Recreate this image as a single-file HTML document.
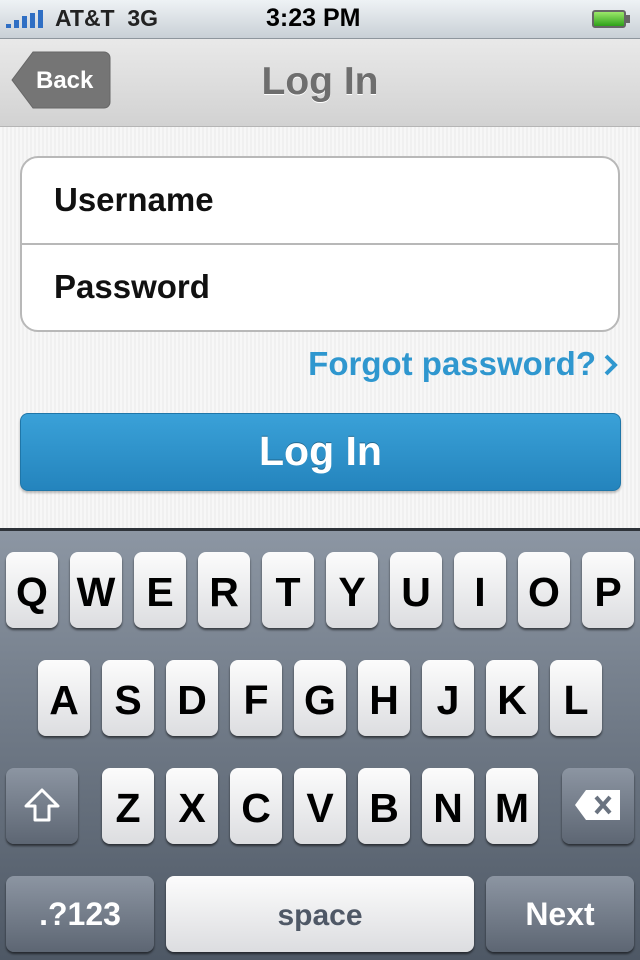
<!DOCTYPE html>
<html><head><meta charset="utf-8"><style>
*{margin:0;padding:0;box-sizing:border-box}
body{width:640px;height:960px;overflow:hidden;font-family:"Liberation Sans",Arial,sans-serif;font-weight:bold;background:#f4f4f4;position:relative}
.abs{position:absolute}
#status{left:0;top:0;width:640px;height:39px;background:linear-gradient(#eef2f5,#c9d0d6);border-bottom:1px solid #8e969d}
#nav{left:0;top:39px;width:640px;height:88px;background:linear-gradient(#e9e9e9,#d2d2d2);border-bottom:1px solid #b5b5b5}
#content{left:0;top:127px;width:640px;height:401px;background:repeating-linear-gradient(90deg,#f7f7f7 0 2px,#f0f0f0 2px 4px)}
.form{left:20px;top:156px;width:600px;height:176px;background:#fff;border:2px solid #b8b8b8;border-radius:18px}
.lbl{font-size:33px;color:#111;left:54px}
#kb{left:0;top:528px;width:640px;height:432px;background:linear-gradient(#8c96a3,#4e5865);border-top:3px solid #2e3339}
.k{position:absolute;width:52px;height:76px;border-radius:8px;background:linear-gradient(#fcfcfc,#dcdde0);box-shadow:0 2px 2px rgba(0,0,0,.55);font-size:41px;color:#000;text-align:center;line-height:80px}
.d{position:absolute;height:76px;border-radius:8px;background:linear-gradient(#8c95a2,#5d6673);box-shadow:0 2px 2px rgba(0,0,0,.55);color:#fff;text-align:center;line-height:76px;font-size:32px}
</style></head><body>
<div id="status" class="abs">
 <svg class="abs" style="left:6px;top:10px" width="42" height="18"><rect x="0" y="14" width="5" height="4" fill="#2f6fc4"/><rect x="8" y="10" width="5" height="8" fill="#2f6fc4"/><rect x="16" y="6" width="5" height="12" fill="#2f6fc4"/><rect x="24" y="3" width="5" height="15" fill="#2f6fc4"/><rect x="32" y="0" width="5" height="18" fill="#2f6fc4"/></svg>
 <div class="abs" style="left:55px;top:5px;font-size:23px;color:#222">AT&amp;T&nbsp; 3G</div>
 <div class="abs" style="left:266px;top:4px;font-size:25px;color:#000">3:23 PM</div>
 <div class="abs" style="left:592px;top:10px;width:34px;height:18px;border:2px solid #666;border-radius:3px;background:linear-gradient(#9be86a,#2ea11a)"></div>
 <div class="abs" style="left:626px;top:15px;width:4px;height:8px;background:#666"></div>
</div>
<div id="nav" class="abs">
 <svg class="abs" style="left:11px;top:12px" width="100" height="60"><path d="M22 1 H93 a6 6 0 0 1 6 6 V51 a6 6 0 0 1 -6 6 H22 L1 29 Z" fill="#757575" stroke="#666" stroke-width="1"/></svg>
 <div class="abs" style="left:36px;top:28px;font-size:24px;color:#fff">Back</div>
 <div class="abs" style="left:0;width:640px;top:21px;text-align:center;font-size:39px;color:#6e6e6e;text-shadow:0 1px 0 #fff">Log In</div>
</div>
<div id="content" class="abs"></div>
<div class="form abs"></div>
<div class="abs" style="left:22px;top:243px;width:596px;height:2px;background:#b8b8b8"></div>
<div class="abs lbl" style="top:181px">Username</div>
<div class="abs lbl" style="top:268px">Password</div>
<div class="abs" style="right:44px;top:345px;font-size:33px;color:#2f97cf">Forgot password?</div>
<svg class="abs" style="left:603px;top:353px" width="16" height="24"><path d="M3 3 L12 12 L3 21" stroke="#2f97cf" stroke-width="4" fill="none"/></svg>
<div class="abs" style="left:20px;top:413px;width:601px;height:78px;border-radius:8px;background:linear-gradient(#3aa1d8,#2484bd);border:1px solid #1f76a8;box-shadow:0 2px 2px rgba(0,0,0,.25);color:#fff;font-size:41px;text-align:center;line-height:74px;text-shadow:0 -1px 0 rgba(0,0,0,.3)">Log In</div>
<div id="kb" class="abs">
 <div class="k" style="left:6px;top:21px">Q</div><div class="k" style="left:70px;top:21px">W</div><div class="k" style="left:134px;top:21px">E</div><div class="k" style="left:198px;top:21px">R</div><div class="k" style="left:262px;top:21px">T</div><div class="k" style="left:326px;top:21px">Y</div><div class="k" style="left:390px;top:21px">U</div><div class="k" style="left:454px;top:21px">I</div><div class="k" style="left:518px;top:21px">O</div><div class="k" style="left:582px;top:21px">P</div>
 <div class="k" style="left:38px;top:129px">A</div><div class="k" style="left:102px;top:129px">S</div><div class="k" style="left:166px;top:129px">D</div><div class="k" style="left:230px;top:129px">F</div><div class="k" style="left:294px;top:129px">G</div><div class="k" style="left:358px;top:129px">H</div><div class="k" style="left:422px;top:129px">J</div><div class="k" style="left:486px;top:129px">K</div><div class="k" style="left:550px;top:129px">L</div>
 <div class="d" style="left:6px;top:237px;width:72px"><svg width="40" height="40" style="margin-top:18px"><path d="M20 4 L36 20 H27 V34 H13 V20 H4 Z" fill="none" stroke="#fff" stroke-width="3" stroke-linejoin="round"/></svg></div>
 <div class="k" style="left:102px;top:237px">Z</div><div class="k" style="left:166px;top:237px">X</div><div class="k" style="left:230px;top:237px">C</div><div class="k" style="left:294px;top:237px">V</div><div class="k" style="left:358px;top:237px">B</div><div class="k" style="left:422px;top:237px">N</div><div class="k" style="left:486px;top:237px">M</div>
 <div class="d" style="left:562px;top:237px;width:72px"><svg width="48" height="34" style="margin-top:20px"><path d="M12 2 H46 V32 H12 L1 17 Z" fill="#fff"/><path d="M22 9 L36 25 M36 9 L22 25" stroke="#6a7380" stroke-width="4"/></svg></div>
 <div class="d" style="left:6px;top:345px;width:148px">.?123</div>
 <div class="k" style="left:166px;top:345px;width:308px;font-size:30px;color:#4f5866;line-height:80px">space</div>
 <div class="d" style="left:486px;top:345px;width:148px">Next</div>
</div>
</body></html>
